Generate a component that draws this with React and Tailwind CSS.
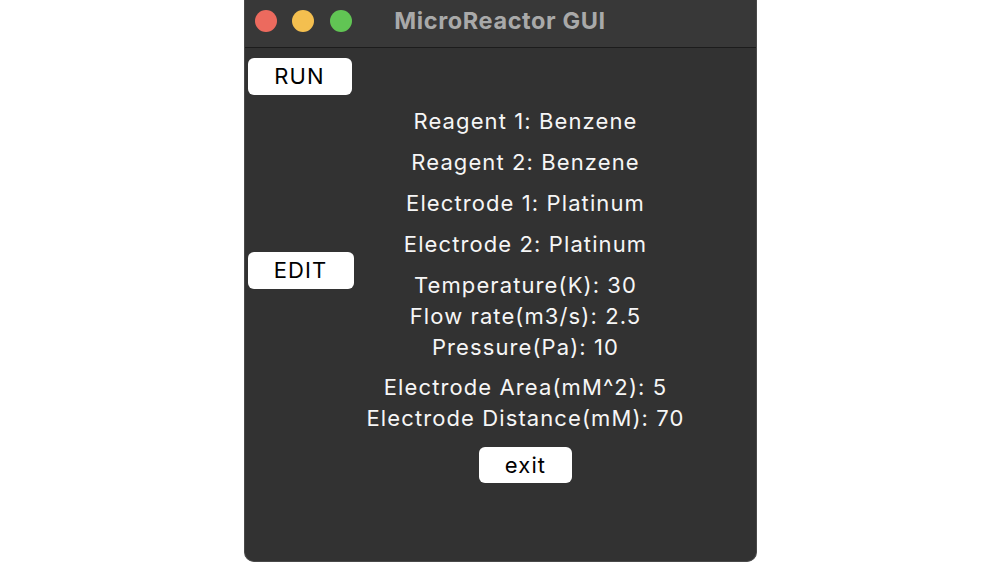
export default function App() {
  const font = { fontFamily: "Inter, 'Open Sans', sans-serif" };
  return (
    <div className="w-[1000px] h-[562px] bg-white flex justify-center" style={font}>
      <div className="w-[513px] h-[562px] bg-[#323232] rounded-b-[10px] border-x border-b border-[#4a4a4a] flex flex-col overflow-hidden">
        <div className="h-[48px] bg-[#383838] border-b border-[#1c1c1c] relative flex items-center justify-center shrink-0">
          <div className="absolute left-[10px] top-[10px] flex gap-[15.5px]">
            <div className="w-[22px] h-[22px] rounded-full bg-[#ec6a5e]" />
            <div className="w-[22px] h-[22px] rounded-full bg-[#f4bf4f]" />
            <div className="w-[22px] h-[22px] rounded-full bg-[#61c554]" />
          </div>
          <div className="text-[23.5px] font-bold tracking-[0.6px] text-[#a9a9a9] -mt-[6px]">MicroReactor GUI</div>
        </div>
        <div className="flex pl-[3px] tracking-[1.1px] font-normal">
          <div className="flex flex-col w-[107px]">
            <div className="mt-[10px] w-[104px] h-[37px] bg-white rounded-[6px] flex items-center justify-center text-[22px] text-black">RUN</div>
            <div className="mt-[157px] w-[106px] h-[37px] bg-white rounded-[6px] flex items-center justify-center text-[22px] text-black">EDIT</div>
          </div>
          <div className="w-[342px] flex flex-col items-center pt-[58px] text-[22px] leading-[31px] text-[#f6f6f6]">
            <div>Reagent 1: Benzene</div>
            <div className="mt-[10px]">Reagent 2: Benzene</div>
            <div className="mt-[10px]">Electrode 1: Platinum</div>
            <div className="mt-[10px]">Electrode 2: Platinum</div>
            <div className="mt-[10px]">Temperature(K): 30</div>
            <div>Flow rate(m3/s): 2.5</div>
            <div>Pressure(Pa): 10</div>
            <div className="mt-[9px]">Electrode Area(mM^2): 5</div>
            <div>Electrode Distance(mM): 70</div>
            <div className="mt-[13px] w-[93px] h-[36px] bg-white rounded-[6px] flex items-center justify-center text-[22px] leading-none text-black">exit</div>
          </div>
        </div>
      </div>
    </div>
  );
}
